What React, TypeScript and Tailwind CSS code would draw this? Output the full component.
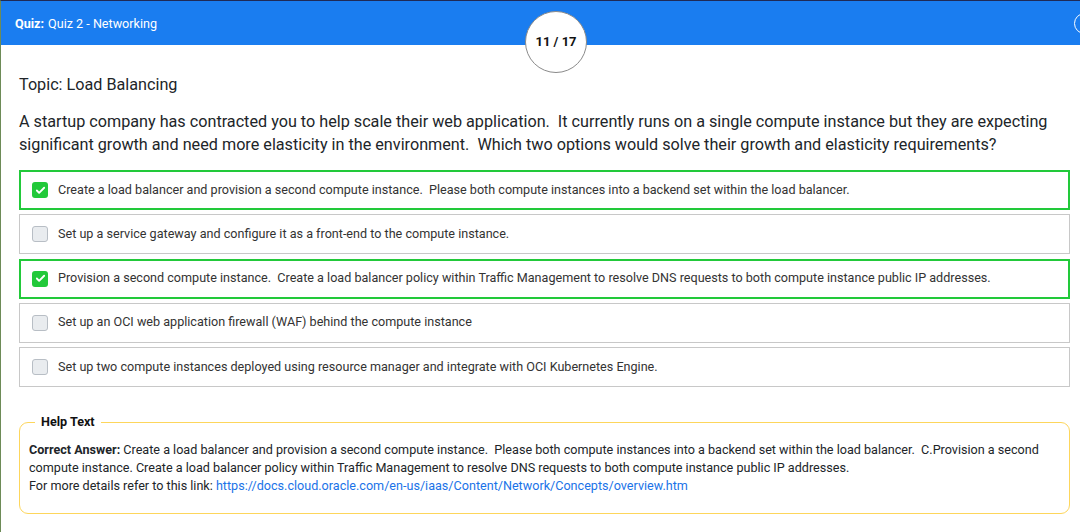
import { Check } from "lucide-react";

const options = [
  {
    text: "Create a load balancer and provision a second compute instance.  Please both compute instances into a backend set within the load balancer.",
    checked: true,
  },
  { text: "Set up a service gateway and configure it as a front-end to the compute instance.", checked: false },
  {
    text: "Provision a second compute instance.  Create a load balancer policy within Traffic Management to resolve DNS requests to both compute instance public IP addresses.",
    checked: true,
  },
  { text: "Set up an OCI web application firewall (WAF) behind the compute instance", checked: false },
  {
    text: "Set up two compute instances deployed using resource manager and integrate with OCI Kubernetes Engine.",
    checked: false,
  },
];

function OptionRow({ text, checked }: { text: string; checked: boolean }) {
  return (
    <div
      className={
        checked
          ? "flex h-[40px] items-center gap-[10px] border-2 border-[#22c93a] bg-white pl-[11px]"
          : "flex h-[40px] items-center gap-[10px] border border-[#c8c8c8] bg-white pl-[12px]"
      }
    >
      {checked ? (
        <span className="flex size-4 shrink-0 items-center justify-center rounded-[3px] bg-[#22c93a]">
          <Check className="size-[11px] text-white" strokeWidth={4} />
        </span>
      ) : (
        <span className="size-4 shrink-0 rounded-[3px] border border-[#b8bec5] bg-[#e9ecef]" />
      )}
      <span className="whitespace-pre-wrap text-[12.6px] text-[#333]">{text}</span>
    </div>
  );
}

export default function App() {
  return (
    <div
      className="relative h-[532px] w-[1080px] overflow-hidden border-t border-l border-t-[#1f2a56] border-l-[#6d8b57] bg-white text-[#212529]"
      style={{ fontFamily: "Roboto, 'Liberation Sans', sans-serif" }}
    >
      <header className="relative flex h-[44px] items-center bg-[#1a7df0] px-[14px] pt-[2px] text-[12.6px] text-white">
        <span className="font-bold">Quiz:</span>
        <span className="ml-1">Quiz 2 - Networking</span>
        <span className="absolute left-[1073px] top-[12px] size-[21px] rounded-full border border-white" />
      </header>

      <div className="absolute left-[524px] top-[10px] flex size-[62px] items-center justify-center rounded-full border border-[#8a8a8a] bg-white text-[13px] font-bold text-[#111]">
        11 / 17
      </div>

      <main className="pl-[18px] pr-[10px] pt-[28px]">
        <h2 className="mb-[13px] text-[16.2px] leading-[24px]">Topic: Load Balancing</h2>
        <p className="whitespace-pre-wrap text-[16.2px] leading-[23px]">
          A startup company has contracted you to help scale their web application.  It currently runs on a single
          compute instance but they are expecting significant growth and need more elasticity in the environment.  Which
          two options would solve their growth and elasticity requirements?
        </p>

        <div className="mt-[14px] flex flex-col gap-[4.3px]">
          {options.map((o) => (
            <OptionRow key={o.text} text={o.text} checked={o.checked} />
          ))}
        </div>

        <fieldset className="mt-[26px] rounded-[9px] border border-[#fdd65c] px-[9px] pb-[18px] pt-[10px] text-[12.6px] leading-[18px]">
          <legend className="ml-[6px] px-[6px] text-[12.6px] font-bold text-[#111]">Help Text</legend>
          <p className="whitespace-pre-wrap">
            <span className="font-bold">Correct Answer:</span> Create a load balancer and provision a second compute
            instance.  Please both compute instances into a backend set within the load balancer.  C.Provision a second
            compute instance. Create a load balancer policy within Traffic Management to resolve DNS requests to both
            compute instance public IP addresses.
          </p>
          <p>
            For more details refer to this link:{" "}
            <a href="#" className="text-[#1a73e8]">
              https://docs.cloud.oracle.com/en-us/iaas/Content/Network/Concepts/overview.htm
            </a>
          </p>
        </fieldset>
      </main>
    </div>
  );
}
